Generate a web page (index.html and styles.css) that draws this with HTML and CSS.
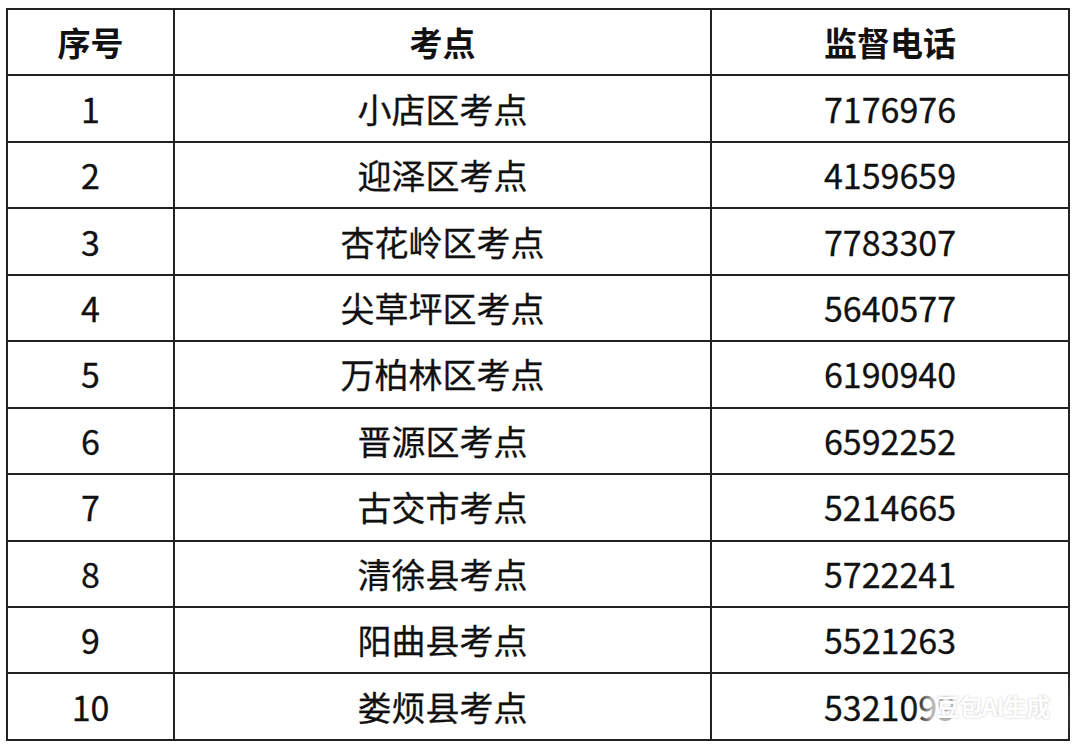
FILE: index.html
```html
<!DOCTYPE html>
<html lang="zh-CN">
<head>
<meta charset="utf-8">
<link rel="stylesheet" href="styles.css">
</head>
<body>
<div class="page">
<table class="grid">
<colgroup><col class="c1"><col class="c2"><col class="c3"></colgroup>
<thead>
<tr><th>序号</th><th>考点</th><th>监督电话</th></tr>
</thead>
<tbody>
<tr><td>1</td><td>小店区考点</td><td>7176976</td></tr>
<tr><td>2</td><td>迎泽区考点</td><td>4159659</td></tr>
<tr><td>3</td><td>杏花岭区考点</td><td>7783307</td></tr>
<tr><td>4</td><td>尖草坪区考点</td><td>5640577</td></tr>
<tr><td>5</td><td>万柏林区考点</td><td>6190940</td></tr>
<tr><td>6</td><td>晋源区考点</td><td>6592252</td></tr>
<tr><td>7</td><td>古交市考点</td><td>5214665</td></tr>
<tr><td>8</td><td>清徐县考点</td><td>5722241</td></tr>
<tr><td>9</td><td>阳曲县考点</td><td>5521263</td></tr>
<tr><td>10</td><td>娄烦县考点</td><td>5321099</td></tr>
</tbody>
</table>
<div class="mark">豆包AI生成</div>
</div>
</body>
</html>
```
FILE: styles.css
```css
html, body {
  margin: 0;
  padding: 0;
  background: #ffffff;
}
.page {
  position: relative;
  width: 1080px;
  height: 747px;
  padding: 8px 0 0 6px;
  box-sizing: border-box;
}
.grid {
  border-collapse: collapse;
  width: 1062px;
  table-layout: fixed;
  font-family: "Noto Sans CJK SC", "Noto Sans", sans-serif;
  color: #111111;
}
.c1 { width: 167px; }
.c2 { width: 537px; }
.c3 { width: 358px; }
.grid th, .grid td {
  border: 2px solid #222222;
  height: 64.45px;
  padding: 0;
  text-align: center;
  vertical-align: middle;
  font-size: 34px;
  line-height: 1;
}
.grid th {
  font-weight: 700;
  font-size: 33px;
}
.grid td {
  font-weight: 400;
  -webkit-text-stroke: 0.3px #111111;
}
.mark {
  position: absolute;
  left: 930px;
  top: 690px;
  font-family: "Noto Sans CJK SC", sans-serif;
  font-weight: 700;
  font-size: 24px;
  line-height: 1.2;
  color: #ffffff;
  text-shadow: 0 0 2px rgba(0, 0, 0, 0.28);
  background: rgba(255, 255, 255, 0.7);
  box-shadow: 0 0 12px 6px rgba(255, 255, 255, 0.7);
  padding: 2px 6px;
  letter-spacing: -1px;
}
```
